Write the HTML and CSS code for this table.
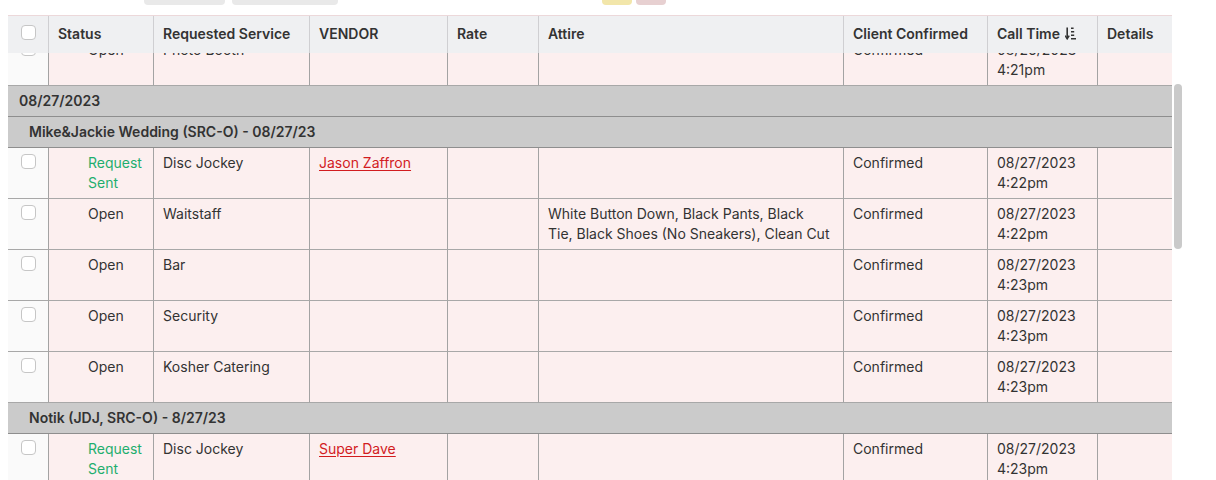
FILE: index.html
```html
<!DOCTYPE html>
<html lang="en">
<head>
<meta charset="utf-8">
<title>Requests</title>
<link rel="stylesheet" href="styles.css">
</head>
<body>
<div class="page">
  <div class="toolbar">
    <span class="tb-btn tb-a"></span>
    <span class="tb-btn tb-b"></span>
    <span class="tb-btn tb-yellow"></span>
    <span class="tb-btn tb-pink"></span>
  </div>
  <div class="grid">
    <div class="row head">
      <div class="cell chk"><span class="box"></span></div>
      <div class="cell">Status</div>
      <div class="cell">Requested Service</div>
      <div class="cell">VENDOR</div>
      <div class="cell">Rate</div>
      <div class="cell">Attire</div>
      <div class="cell">Client Confirmed</div>
      <div class="cell">Call Time
        <svg class="sort" width="11" height="13" viewBox="0 0 11 13" aria-hidden="true">
          <path d="M2.2 0.5v11" stroke="#333" stroke-width="1.6" fill="none"/>
          <path d="M0.2 8.6L2.2 11.8L4.2 8.6" stroke="#333" stroke-width="1.5" fill="none"/>
          <path d="M6 1.3h2.6M6 4.8h3.2M6 8.3h3.2M6 11.8h5" stroke="#333" stroke-width="1.4" fill="none"/>
        </svg>
      </div>
      <div class="cell">Details</div>
    </div>
    <div class="viewport">
      <div class="body">
        <div class="row data">
          <div class="cell chk"><span class="box"></span></div>
          <div class="cell status">Open</div>
          <div class="cell">Photo Booth</div>
          <div class="cell"></div>
          <div class="cell"></div>
          <div class="cell attire"></div>
          <div class="cell">Confirmed</div>
          <div class="cell">08/26/2023 4:21pm</div>
          <div class="cell"></div>
        </div>
        <div class="group date">08/27/2023</div>
        <div class="group event">Mike&amp;Jackie Wedding (SRC-O) - 08/27/23</div>
        <div class="row data">
          <div class="cell chk"><span class="box"></span></div>
          <div class="cell status sent">Request Sent</div>
          <div class="cell">Disc Jockey</div>
          <div class="cell"><a class="vendor" href="#">Jason Zaffron</a></div>
          <div class="cell"></div>
          <div class="cell attire"></div>
          <div class="cell">Confirmed</div>
          <div class="cell">08/27/2023 4:22pm</div>
          <div class="cell"></div>
        </div>
        <div class="row data">
          <div class="cell chk"><span class="box"></span></div>
          <div class="cell status">Open</div>
          <div class="cell">Waitstaff</div>
          <div class="cell"></div>
          <div class="cell"></div>
          <div class="cell attire">White Button Down, Black Pants, Black Tie, Black Shoes (No Sneakers), Clean Cut</div>
          <div class="cell">Confirmed</div>
          <div class="cell">08/27/2023 4:22pm</div>
          <div class="cell"></div>
        </div>
        <div class="row data">
          <div class="cell chk"><span class="box"></span></div>
          <div class="cell status">Open</div>
          <div class="cell">Bar</div>
          <div class="cell"></div>
          <div class="cell"></div>
          <div class="cell attire"></div>
          <div class="cell">Confirmed</div>
          <div class="cell">08/27/2023 4:23pm</div>
          <div class="cell"></div>
        </div>
        <div class="row data">
          <div class="cell chk"><span class="box"></span></div>
          <div class="cell status">Open</div>
          <div class="cell">Security</div>
          <div class="cell"></div>
          <div class="cell"></div>
          <div class="cell attire"></div>
          <div class="cell">Confirmed</div>
          <div class="cell">08/27/2023 4:23pm</div>
          <div class="cell"></div>
        </div>
        <div class="row data">
          <div class="cell chk"><span class="box"></span></div>
          <div class="cell status">Open</div>
          <div class="cell">Kosher Catering</div>
          <div class="cell"></div>
          <div class="cell"></div>
          <div class="cell attire"></div>
          <div class="cell">Confirmed</div>
          <div class="cell">08/27/2023 4:23pm</div>
          <div class="cell"></div>
        </div>
        <div class="group event">Notik (JDJ, SRC-O) - 8/27/23</div>
        <div class="row data">
          <div class="cell chk"><span class="box"></span></div>
          <div class="cell status sent">Request Sent</div>
          <div class="cell">Disc Jockey</div>
          <div class="cell"><a class="vendor" href="#">Super Dave</a></div>
          <div class="cell"></div>
          <div class="cell attire"></div>
          <div class="cell">Confirmed</div>
          <div class="cell">08/27/2023 4:23pm</div>
          <div class="cell"></div>
        </div>
      </div>
    </div>
    <div class="scrollbar"></div>
  </div>
</div>
</body>
</html>
```

FILE: styles.css
```css
* { box-sizing: border-box; }
html, body {
  margin: 0;
  padding: 0;
  overflow: hidden;
  background: #fff;
}
body {
  font-family: Inter, "Liberation Sans", Arial, sans-serif;
  font-size: 14px;
  line-height: 20px;
  color: #333;
}
.page {
  padding-left: 8px;
  height: 480px;
  overflow: hidden;
}
.toolbar {
  display: flex;
  height: 5px;
}
.tb-btn {
  display: block;
  height: 5px;
  border-radius: 0 0 4px 4px;
}
.tb-a { margin-left: 136px; width: 81px; background: #e9e9e9; }
.tb-b { margin-left: 7px; width: 106px; background: #e9e9e9; }
.tb-yellow { margin-left: 264px; width: 30px; background: #f2e6aa; }
.tb-pink { margin-left: 4px; width: 30px; background: #e7d0d1; }

.grid {
  position: relative;
  margin-top: 10px;
  width: 1164px;
}
.row {
  display: grid;
  grid-template-columns: 40px 105px 156px 138px 91px 305px 144px 110px 75px;
}
.head {
  height: 38px;
  background: #eff0f2;
  border-top: 1px solid #ecd8da;
  font-weight: 600;
}
.head .cell {
  display: flex;
  align-items: center;
  padding: 0 9px 2px;
  border-left: 1px solid #cfcfd2;
  white-space: nowrap;
}
.head .chk {
  justify-content: center;
  padding: 0 0 5px;
  border-left: none;
}
.sort { margin-left: 5px; }

.viewport {
  height: 427px;
  overflow: hidden;
}
.body { margin-top: -18px; }

.data { background: #fcefef; }
.data .cell {
  padding: 5px 9px;
  border-left: 1px solid #a3a3a3;
  border-bottom: 1px solid #a8a8a8;
}
.data .cell.attire { padding-right: 11px; }
.data .chk {
  background: #fafafa;
  border-left: none;
  display: flex;
  justify-content: center;
  align-items: flex-start;
  padding: 6px 0 0;
}
.data .status { padding-left: 39px; }
.status.sent { color: #1fae6e; }
.vendor {
  color: #d21c1f;
  text-decoration: underline;
  text-underline-offset: 2px;
}

.box {
  display: block;
  width: 15px;
  height: 15px;
  border: 1px solid #c6c6c6;
  border-radius: 4px;
  background: #fff;
}

.group {
  height: 31px;
  line-height: 30px;
  background: #cbcbcb;
  border-bottom: 1px solid #8e8e8e;
  font-weight: 600;
  color: #333;
}
.group.date { padding-left: 11px; }
.group.event { padding-left: 21px; }

.scrollbar {
  position: absolute;
  left: 1166px;
  top: 69px;
  width: 8px;
  height: 165px;
  border-radius: 4px;
  background: #cacaca;
}
```
